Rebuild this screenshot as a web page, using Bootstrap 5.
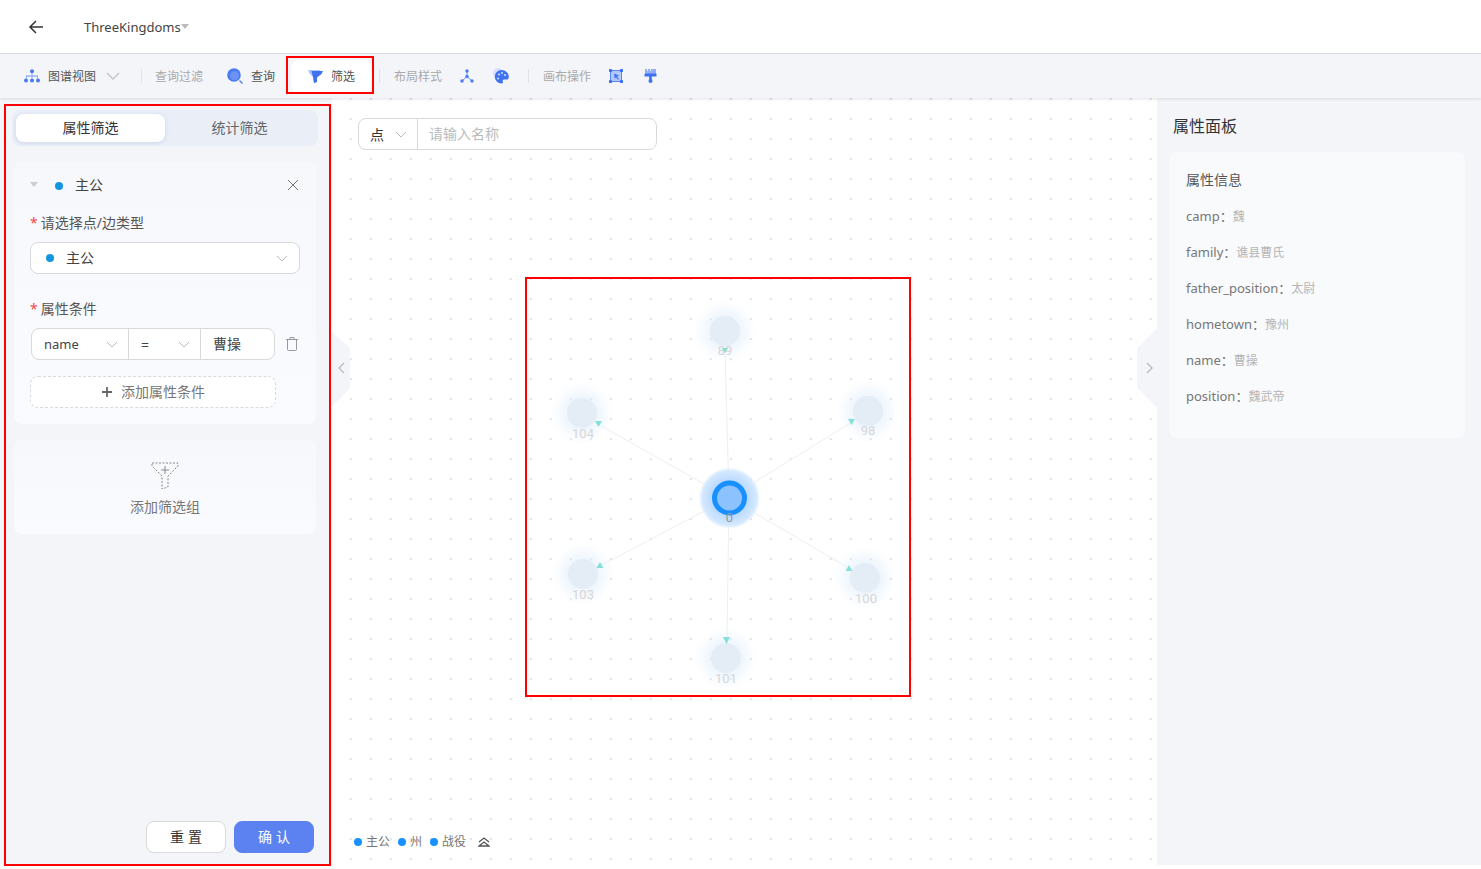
<!doctype html>
<html lang="zh">
<head>
<meta charset="utf-8">
<title>ThreeKingdoms</title>
<link href="https://cdn.jsdelivr.net/npm/bootstrap@5.3.0/dist/css/bootstrap.min.css" rel="stylesheet">
<style>
html,body{height:100%;background:#fff;overflow:hidden}
body{font-family:"Noto Sans","Noto Sans CJK SC",sans-serif;font-size:14px;color:#333}
.app-root{height:865px}
.top-head{height:54px;border-bottom:1px solid #dcdfe6;padding-left:28px;flex:none}
.top-title{margin-left:40px;color:#444;font-size:13px;margin-top:2px}
.caret-down{display:inline-block;width:0;height:0;border:4px solid transparent;border-top:5px solid #bbb;border-bottom:0}
.tool-bar{height:44px;flex:none;background:#f3f5f9;padding-left:24px;font-size:12px;color:#555;box-shadow:0 1px 3px rgba(0,0,0,.12);position:relative;z-index:3}
.tool-item{display:flex;align-items:center}
.tool-text{margin-top:2px}
.tool-muted{color:#aaa}
.tool-sep{width:1px;height:14px;background:#dfe2e8}
.tool-active{width:81px;height:33px;background:#fff;border-radius:8px;justify-content:center;gap:8px;color:#555}
.left-pane{width:332px;flex:none;background:#f3f5f9;padding:12px 14px 12px 12px;font-size:14px}
.seg-tabs{background:#e9eef7;border-radius:8px;padding:4px;height:36px;width:306px}
.seg-tabs .nav-link{height:28px;padding:0;width:149px;line-height:28px;text-align:center;color:#666;font-size:14px;border-radius:8px}
.seg-tabs .nav-link.active{background:#fff;color:#333;box-shadow:0 1px 4px rgba(90,110,160,.18)}
.pane-card{margin-left:2px;width:302px;border:0;border-radius:8px;background:linear-gradient(180deg,#f7f8fc,#fafbfe)}
.card-one{margin-top:16px;height:262px;padding:0 16px}
.card-two{margin-top:16px;height:94px;color:#777;align-items:center;padding-top:21px}
.card-two span{margin-top:7px}
.cond-head{height:46px;padding-top:1px;margin-bottom:6px}
.lift-text{margin-bottom:2px}
.type-dot{width:8px;height:8px;border-radius:50%;background:#1296e0;display:inline-block}
.req-label{line-height:18px;color:#555;margin-bottom:10px}
.req-label i{color:#f5484d;font-style:normal;margin-right:3px}
.sel-box{height:32px;width:270px;background:#fff;border:1px solid #d9d9d9;border-radius:8px;padding:0 11px 0 15px}
.cond-group{width:245px;height:32px;margin-left:1px;margin-top:10px}
.cond-group .input-group-text{background:#fff;border-color:#d9d9d9;font-size:14px;color:#444;padding:0 0 0 12px;height:32px;border-radius:8px;justify-content:space-between}
.cond-a{width:98px;padding-right:10px!important;font-size:13px!important}
.cond-a span{margin-top:2px}
.cond-b{width:73px;padding-right:10px!important}
.cond-c{width:75px;padding-bottom:2px!important}
.dash-add{width:246px;height:32px;margin-top:16px;background:#fff;border:1px dashed #d9d9d9;border-radius:8px;color:#777;font-size:14px;padding:0}
.foot-btns{margin-top:auto;padding-right:4px;margin-bottom:0}
.act-btn{width:80px;height:32px;padding:0 0 2px;font-size:14px;border-radius:8px;letter-spacing:.3em;text-indent:.3em}
.act-reset{background:#fff;border:1px solid #d9d9d9;color:#333}
.act-ok{background:#5b82f0;border:1px solid #5b82f0;color:#fff}
.graph-pane{background-color:#fff;background-image:radial-gradient(circle at 19px 1px,#e6e6e6 1.2px,transparent 1.7px);background-size:20px 20px}
.graph-svg{position:absolute;inset:0;width:100%;height:100%}
.name-search{position:absolute;left:26px;top:20px;width:299px;height:32px;background:#fff;border:1px solid #d9d9d9;border-radius:8px;font-size:14px;color:#333}
.name-type{width:59px;border-right:1px solid #d9d9d9;padding:0 10px 0 11px}
.name-ph{padding:0 0 2px 11px;color:#bbb}
.legend-bar{position:absolute;left:22px;top:735px;font-size:12px;color:#777;gap:8px}
.legend-dot{width:8px;height:8px;border-radius:50%;background:#1890ff;display:inline-block;margin-right:4px}
.side-handle{position:absolute;top:230px;width:20px;height:80px;background:#f3f5f9;z-index:2}
.handle-l{left:0;clip-path:polygon(0 4px,18px 20px,18px 60px,0 79px)}
.handle-r{right:0;clip-path:polygon(100% 0,0 25%,0 75%,100% 100%)}
.right-pane{width:324px;flex:none;background:#f3f5f9;padding:16px 16px 0 12px}
.pane-title{font-size:16px;color:#333;margin:0 0 14px 4px;line-height:24px;font-weight:400}
.info-card{height:286px;width:296px;border:0;border-radius:8px;background:#f9fafc;padding:10px 17px}
.info-row{height:36px;display:flex;align-items:center;font-size:13px;color:#777;flex:none}
.info-row b{font-weight:400;font-size:12px;color:#b5b5b5}
.info-head{color:#555;font-size:14px;height:34px;margin-bottom:3px}
.mark-box{position:absolute;border:2px solid #f00;pointer-events:none;z-index:9}
.mark-a{left:286px;top:56px;width:88px;height:38px}
.mark-b{left:4px;top:104px;width:327px;height:762px}
.mark-c{left:525px;top:277px;width:386px;height:420px}
</style>
</head>
<body class="m-0 position-relative">
<div class="app-root d-flex flex-column">
  <header class="top-head d-flex align-items-center bg-white">
    <svg width="16" height="16" viewBox="0 0 16 16" fill="none" stroke="#333" stroke-width="1.5"><path d="M15 8H2M8 2 2 8l6 6"/></svg>
    <span class="top-title">ThreeKingdoms</span><span class="caret-down"></span>
  </header>
  <nav class="tool-bar d-flex align-items-center">
    <span class="tool-item" style="width:96px">
      <svg width="16" height="14" viewBox="0 0 16 14" fill="#4a7cf0" class="me-2"><circle cx="8" cy="2.2" r="2"/><circle cx="2" cy="11.500" r="2"/><circle cx="8" cy="11.500" r="2"/><circle cx="14" cy="11.500" r="2"/><path d="M7.600 4h.8v2.600H14v3h-.8V7.400H8.400v2.200h-.8V7.400H2.800v2.200H2v-3h5.600z" opacity=".75"/></svg><span class="tool-text">图谱视图</span>
      <svg width="14" height="8" viewBox="0 0 14 8" fill="none" stroke="#c4c4c4" stroke-width="1.400" class="ms-auto"><path d="M1 1l6 6 6-6"/></svg>
    </span>
    <span class="tool-sep" style="margin-left:21px"></span>
    <span class="tool-item tool-muted" style="margin-left:13px"><span class="tool-text">查询过滤</span></span>
    <span class="tool-item" style="margin-left:24px">
      <svg width="16" height="16" viewBox="0 0 16 16" class="me-2"><circle cx="7" cy="7" r="6.800" fill="#4a7cf0"/><circle cx="7.500" cy="7.800" r="4.500" fill="#6c92f4"/><path d="M12.500 12.500 15.500 15.500" stroke="#4a7cf0" stroke-width="1.300"/></svg><span class="tool-text">查询</span>
    </span>
    <span class="tool-item tool-active" style="margin-left:16px">
      <svg width="15" height="13" viewBox="0 0 15 13"><path d="M0 0h12l-1.500 3.500-3 4V13l-2-1V7.500L1.500 3.500z" fill="#a9c4fa"/><path d="M3.500 1h11.500l-1.500 3-4.500 3.500V12l-3 1-1-6z" fill="#3f72ee"/></svg><span class="tool-text">筛选</span>
    </span>
    <span class="tool-sep" style="margin-left:7px"></span>
    <span class="tool-item tool-muted" style="margin-left:14px"><span class="tool-text">布局样式</span></span>
    <svg width="14" height="14" viewBox="0 0 14 14" style="margin-left:18px" fill="#4a7cf0" stroke="#4a7cf0"><path d="M7 2.500V7.500L2 12M7 7.500 12 12" fill="none" stroke-width=".8"/><circle cx="7" cy="2" r="1.700" stroke="none"/><circle cx="7" cy="7.500" r="1.700" stroke="none"/><circle cx="2" cy="12" r="1.700" stroke="none"/><circle cx="12" cy="12" r="1.700" stroke="none"/></svg>
    <svg width="16" height="16" viewBox="0 0 16 16" style="margin-left:19px"><circle cx="5" cy="5" r="5" fill="#d5e0fa"/><path d="M8.500 2a6.500 6.500 0 1 0 0 13.500c1.500 0 1.800-1 1.300-2-.5-1 .2-2 1.300-2H14c1.200 0 1.800-.9 1.800-2.500C15.800 5 12.500 2 8.500 2z" fill="#3f72ee"/><circle cx="6" cy="6.500" r="1.100" fill="#cfdcfb"/><circle cx="9" cy="5" r="1.100" fill="#cfdcfb"/><circle cx="12" cy="7" r="1.100" fill="#cfdcfb"/><circle cx="5" cy="10.500" r="1.100" fill="#cfdcfb"/></svg>
    <span class="tool-sep" style="margin-left:19px"></span>
    <span class="tool-item tool-muted" style="margin-left:14px"><span class="tool-text">画布操作</span></span>
    <svg width="14" height="14" viewBox="0 0 14 14" style="margin-left:18px"><rect x="1.500" y="1.500" width="11" height="11" fill="#b4c9fa" stroke="#5a86f2"/><g fill="#3f72ee"><rect width="3" height="3" rx=".5"/><rect x="11" width="3" height="3" rx=".5"/><rect y="11" width="3" height="3" rx=".5"/><rect x="11" y="11" width="3" height="3" rx=".5"/><path d="M5 4.500l5 2-2 1 2 2.500-1 .7-2-2.500-1.300 1.500z"/></g></svg>
    <svg width="13" height="14" viewBox="0 0 13 14" style="margin-left:21px"><path d="M1 0h2v2h1V0h2v2h1V0h5v5H1z" fill="#8fb0f7"/><rect x="0.500" y="4.500" width="12" height="3" rx=".5" fill="#3f72ee"/><rect x="5.200" y="7" width="2.600" height="4" fill="#3f72ee"/><circle cx="6.500" cy="12" r="2" fill="#3f72ee"/></svg>
  </nav>
  <main class="d-flex flex-grow-1">
    <aside class="left-pane d-flex flex-column">
      <ul class="nav seg-tabs flex-nowrap">
        <li class="nav-item"><a class="nav-link active" href="#">属性筛选</a></li>
        <li class="nav-item"><a class="nav-link" href="#">统计筛选</a></li>
      </ul>
      <section class="card pane-card card-one">
        <div class="cond-head d-flex align-items-center">
          <span class="caret-down" style="border-top-color:#ccc;margin-bottom:2px"></span>
          <span class="type-dot" style="margin-left:17px"></span>
          <span class="lift-text" style="margin-left:12px;color:#444">主公</span>
          <svg width="12" height="12" viewBox="0 0 12 12" class="ms-auto" style="margin:0 1px 2px 0" stroke="#777" fill="none"><path d="M1 1l10 10M11 1 1 11"/></svg>
        </div>
        <div class="req-label"><i>*</i>请选择点/边类型</div>
        <div class="sel-box d-flex align-items-center">
          <span class="type-dot"></span><span class="lift-text" style="margin-left:12px;color:#444">主公</span>
          <svg width="12" height="7" viewBox="0 0 12 7" fill="none" stroke="#bbb" class="ms-auto"><path d="M1 1l5 5 5-5"/></svg>
        </div>
        <div class="req-label" style="margin:26px 0 0"><i>*</i>属性条件</div>
        <div class="d-flex align-items-center">
          <div class="input-group cond-group flex-nowrap">
            <span class="input-group-text cond-a"><span>name</span><svg width="12" height="7" viewBox="0 0 12 7" fill="none" stroke="#bbb"><path d="M1 1l5 5 5-5"/></svg></span>
            <span class="input-group-text cond-b">=<svg width="12" height="7" viewBox="0 0 12 7" fill="none" stroke="#bbb"><path d="M1 1l5 5 5-5"/></svg></span>
            <span class="input-group-text cond-c">曹操</span>
          </div>
          <svg width="12" height="14" viewBox="0 0 12 14" style="margin:10px 0 0 10px" fill="none" stroke="#999"><path d="M0 2.500h12M4 2.500V.500h4v2M1.500 2.500v10a1 1 0 0 0 1 1h7a1 1 0 0 0 1-1v-10"/></svg>
        </div>
        <button type="button" class="btn dash-add d-flex align-items-center justify-content-center">
          <svg width="12" height="12" viewBox="0 0 12 12" stroke="#666" stroke-width="1.800" class="me-2"><path d="M6 1v10M1 6h10"/></svg><span class="lift-text">添加属性条件</span>
        </button>
      </section>
      <section class="card pane-card card-two">
        <svg width="28" height="28" viewBox="0 0 28 28" fill="none" stroke="#888" stroke-dasharray="2 1.500"><path d="M1 2h26v3L17 15v11l-6 2V15L1 5z"/><path d="M14 5v8M10 9h8" stroke-dasharray="none"/></svg>
        <span>添加筛选组</span>
      </section>
      <div class="foot-btns d-flex justify-content-end gap-2">
        <button type="button" class="btn act-btn act-reset">重置</button>
        <button type="button" class="btn act-btn act-ok">确认</button>
      </div>
    </aside>
    <section class="graph-pane flex-grow-1 position-relative">
      <svg class="graph-svg" viewBox="332 98 825 767" font-family="Roboto,sans-serif" font-size="13" text-anchor="middle">
        <defs>
          <radialGradient id="haloFade"><stop offset=".4" stop-color="#dcecfc" stop-opacity=".6"/><stop offset="1" stop-color="#e9f3fd" stop-opacity="0"/></radialGradient>
          <radialGradient id="coreHalo"><stop offset=".55" stop-color="#b8d9ff"/><stop offset=".9" stop-color="#d4e8ff"/><stop offset="1" stop-color="#dcedff" stop-opacity=".4"/></radialGradient>
        </defs>
        <g stroke="#eeeeee"><path d="M729 498 725 350M729 498 598 424M729 498 852 422M729 498 600 566M729 498 849 568M729 498 727 640"/></g>
        <g fill="url(#haloFade)"><circle cx="725" cy="331" r="32"/><circle cx="582" cy="413" r="32"/><circle cx="868" cy="411" r="32"/><circle cx="583" cy="574" r="32"/><circle cx="865" cy="578" r="32"/><circle cx="726" cy="658" r="32"/></g>
        <g fill="#e4edf5"><circle cx="725" cy="331" r="15"/><circle cx="582" cy="413" r="15"/><circle cx="868" cy="411" r="15"/><circle cx="583" cy="574" r="15"/><circle cx="865" cy="578" r="15"/><circle cx="726" cy="658" r="15"/></g>
        <g fill="#d6d6d6"><text x="725" y="355">89</text><text x="583" y="438">104</text><text x="868" y="435">98</text><text x="583" y="599">103</text><text x="866" y="603">100</text><text x="726" y="683">101</text></g>
        <g fill="#84e0d8"><path d="M722 348h6l-3 5zM595 421h7l-3.500 6zM848 419h7l-3.500 6zM600 562l3.500 6h-7zM849 565l3.500 6h-7zM723 637h7l-3.500 7z"/></g>
        <circle cx="729.500" cy="498" r="30" fill="url(#coreHalo)"/>
        <circle cx="729.500" cy="498" r="15" fill="#8cc3ff" stroke="#1890ff" stroke-width="5"/>
        <text x="729.500" y="522" fill="#999">0</text>
      </svg>
      <div class="name-search d-flex">
        <div class="name-type d-flex align-items-center justify-content-between">点<svg width="12" height="7" viewBox="0 0 12 7" fill="none" stroke="#bbb"><path d="M1 1l5 5 5-5"/></svg></div>
        <div class="name-ph d-flex align-items-center">请输入名称</div>
      </div>
      <div class="side-handle handle-l"><svg class="d-block" width="8" height="12" viewBox="0 0 8 12" fill="none" stroke="#bbb" stroke-width="1.300" style="margin:34px 0 0 5px"><path d="M7 1 2 6l5 5"/></svg></div>
      <div class="side-handle handle-r"><svg class="d-block" width="8" height="12" viewBox="0 0 8 12" fill="none" stroke="#bbb" stroke-width="1.300" style="margin:34px 0 0 9px"><path d="M1 1l5 5-5 5"/></svg></div>
      <div class="legend-bar d-flex align-items-center">
        <span class="d-flex align-items-center"><span class="legend-dot"></span>主公</span>
        <span class="d-flex align-items-center"><span class="legend-dot"></span>州</span>
        <span class="d-flex align-items-center"><span class="legend-dot"></span>战役</span>
        <svg width="12" height="10" viewBox="0 0 12 10" fill="none" stroke="#555" stroke-width="1.300" style="margin-left:4px"><path d="M1 5 6 1l5 4M1 9h10L6 5z"/></svg>
      </div>
    </section>
    <aside class="right-pane">
      <h2 class="pane-title">属性面板</h2>
      <div class="card info-card">
        <div class="info-row info-head">属性信息</div>
        <div class="info-row">camp：<b>魏</b></div>
        <div class="info-row">family：<b>谯县曹氏</b></div>
        <div class="info-row">father_position：<b>太尉</b></div>
        <div class="info-row">hometown：<b>豫州</b></div>
        <div class="info-row">name：<b>曹操</b></div>
        <div class="info-row">position：<b>魏武帝</b></div>
      </div>
    </aside>
  </main>
</div>
<div class="mark-box mark-a"></div>
<div class="mark-box mark-b"></div>
<div class="mark-box mark-c"></div>
<script src="https://cdn.jsdelivr.net/npm/bootstrap@5.3.0/dist/js/bootstrap.bundle.min.js"></script>
</body>
</html>
